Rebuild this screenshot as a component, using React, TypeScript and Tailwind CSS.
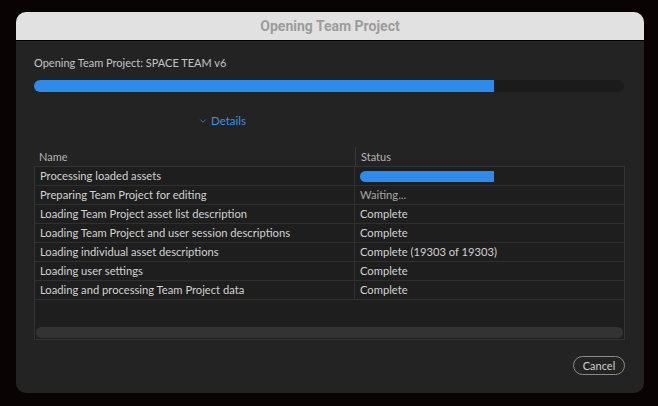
import { ChevronDown } from "lucide-react";

const rows: { name: string; status: string | null; dim?: boolean }[] = [
  { name: "Processing loaded assets", status: null },
  { name: "Preparing Team Project for editing", status: "Waiting...", dim: true },
  { name: "Loading Team Project asset list description", status: "Complete" },
  { name: "Loading Team Project and user session descriptions", status: "Complete" },
  { name: "Loading individual asset descriptions", status: "Complete (19303 of 19303)" },
  { name: "Loading user settings", status: "Complete" },
  { name: "Loading and processing Team Project data", status: "Complete" },
];

export default function App() {
  return (
    <div
      className="w-[658px] h-[406px] bg-[#0a0304] pt-[12px] pl-[16px]"
      style={{ fontFamily: "Lato, 'Open Sans', sans-serif" }}
    >
      <div className="w-[628px] h-[381px] rounded-[10px] overflow-hidden bg-[#232323] flex flex-col">
        <div className="h-[29px] bg-[#e1e1e1] border-b border-black flex items-center justify-center">
          <span
            className="text-[14px] font-bold text-[#9c9c9c]"
            style={{ fontFamily: "Roboto, 'Liberation Sans', sans-serif" }}
          >
            Opening Team Project
          </span>
        </div>

        <div className="flex-1 px-[18px] pt-[14px] flex flex-col">
          <div className="text-[11px] leading-[16px] text-[#c4c4c4]">
            Opening Team Project: SPACE TEAM v6
          </div>

          <div className="mt-[9px] h-[12px] w-[590px] rounded-full bg-[#1b1b1b] overflow-hidden">
            <div className="h-full w-[460px] bg-[#2d8ceb]" />
          </div>

          <div className="mt-[21px] h-[16px] flex items-center pl-[164px] text-[#3b91e4] text-[11.5px]">
            <ChevronDown size={10} strokeWidth={1.75} className="mr-[3px]" />
            <span>Details</span>
          </div>

          <div className="mt-[18px] flex text-[11px] leading-[19px] text-[#b4b4b4]">
            <div className="w-[321px] pl-[5px]">Name</div>
            <div className="border-l border-[#3a3a3a] pl-[5px]">Status</div>
          </div>

          <div className="w-[591px] border border-[#333333] bg-[#1e1e1e] flex flex-col">
            {rows.map((r) => (
              <div
                key={r.name}
                className="flex h-[19px] border-b border-[#2f2f2f] text-[11.2px] leading-[18px] text-[#d2d2d2]"
              >
                <div className="w-[320px] pl-[5px] border-r border-[#2f2f2f]">{r.name}</div>
                <div className="flex-1 pl-[5px] flex items-center">
                  {r.status === null ? (
                    <div className="h-[11px] w-[134px] rounded-l-full bg-[#2d8ceb]" />
                  ) : (
                    <span className={r.dim ? "text-[#a6a6a6]" : ""}>{r.status}</span>
                  )}
                </div>
              </div>
            ))}
            <div className="h-[27px]" />
            <div className="h-[11px] mx-[1px] mb-[1px] rounded-full bg-[#333333]" />
          </div>

          <div className="flex justify-end mt-[16px]">
            <button className="h-[19px] w-[52px] rounded-full border border-[#8a8a8a] text-[11px] leading-none text-[#cfcfcf] mr-[1px]">
              Cancel
            </button>
          </div>
        </div>
      </div>
    </div>
  );
}
